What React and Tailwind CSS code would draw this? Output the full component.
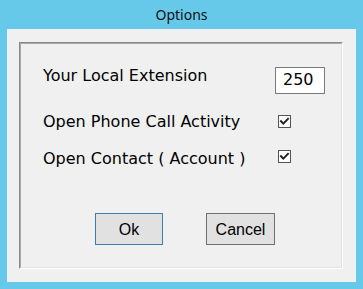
import React from "react";

function Check() {
  return (
    <div className="w-[13px] h-[13px] border border-[#555] bg-white flex items-center justify-center">
      <svg width="11" height="11" viewBox="0 0 11 11">
        <path d="M2 5.2 L4.3 7.6 L9 2.8" fill="none" stroke="#222" strokeWidth="2" strokeLinecap="square" />
      </svg>
    </div>
  );
}

export default function App() {
  const dv = { fontFamily: '"DejaVu Sans", Verdana, sans-serif' };
  return (
    <div className="w-[363px] h-[289px] bg-[#66c9ea] flex flex-col">
      <div
        className="h-[29px] leading-[29px] text-center text-[14px] text-[#111]"
        style={{ fontFamily: '"Noto Sans", "Open Sans", sans-serif' }}
      >
        Options
      </div>
      <div className="mx-[7px] h-[253px] bg-[#f0f0f0] pt-[13px] pl-[12px]">
        <div className="w-[324px] h-[227px] border-t border-l border-[#8a8a8a] border-b-white border-r-white border-b border-r">
          <div className="w-full h-full border-t border-l border-[#a8a8a8] border-b border-r border-b-[#e3e3e3] border-r-[#e3e3e3] flex flex-col pt-[22px] pl-[22px] text-[16px] leading-[19px] text-black" style={dv}>
            <div className="flex items-start">
              <div className="w-[232px]">Your Local Extension</div>
              <div className="mt-[1px] w-[50px] h-[27px] bg-white border border-[#7a7a7a] pl-[7px] pt-[2px]">250</div>
            </div>
            <div className="flex items-start mt-[18px]">
              <div className="w-[235px]">Open Phone Call Activity</div>
              <div className="mt-[3px]"><Check /></div>
            </div>
            <div className="flex items-start mt-[18px]">
              <div className="w-[235px]">Open Contact ( Account )</div>
              <div className="mt-[1px]"><Check /></div>
            </div>
            <div className="flex mt-[45px]" style={{ fontFamily: '"Liberation Sans", Arial, sans-serif' }}>
              <div className="ml-[52px] w-[68px] h-[32px] bg-[#e1e1e1] border border-[#3c7fb1] flex items-center justify-center text-[16px]">Ok</div>
              <div className="ml-[43px] w-[69px] h-[32px] bg-[#e1e1e1] border border-[#707070] flex items-center justify-center text-[16px]">Cancel</div>
            </div>
          </div>
        </div>
      </div>
    </div>
  );
}
